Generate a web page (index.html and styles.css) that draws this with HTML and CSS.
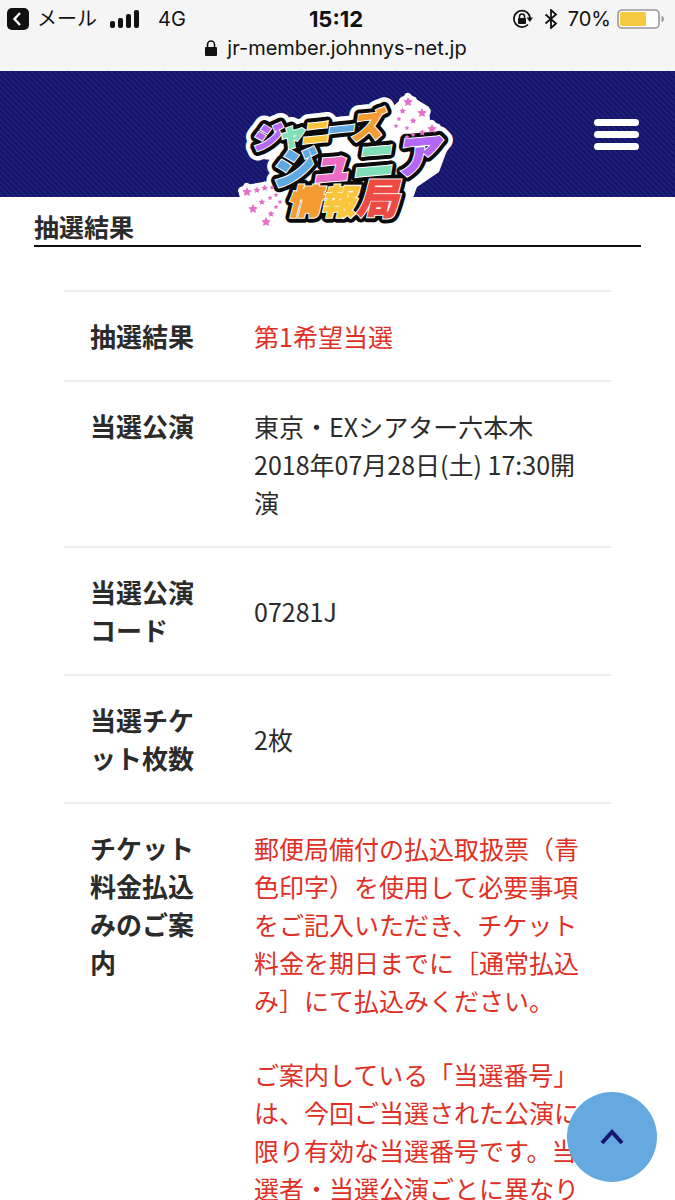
FILE: index.html
```html
<!DOCTYPE html>
<html lang="ja">
  <head>
    <meta charset="UTF-8" />
    <title>抽選結果</title>
    <meta name="viewport" content="width=device-width,initial-scale=1" />
    <link rel="stylesheet" href="styles.css">
  </head>
  <body>
    <div class="screen">
      <!-- ステータスバー -->
      <div class="browser-bar">
        <div class="status">
          <div class="status-left">
            <a href="#" class="back-app">
              <svg width="22" height="22" viewBox="0 0 22 22" aria-hidden="true">
                <rect width="22" height="22" rx="5" />
                <path d="M13 5 7.500 11l5.500 6" fill="none" stroke="#fff" stroke-width="2.400" />
              </svg>
              メール
            </a>
            <svg class="signal" width="29" height="20" viewBox="0 0 29 20" aria-hidden="true">
              <rect x="0" y="12" width="5" height="7" rx="2" />
              <rect x="8" y="9" width="5" height="10" rx="2" />
              <rect x="16" y="5" width="5" height="14" rx="2" />
              <rect x="24" y="1" width="5" height="18" rx="2" />
            </svg>
            <span>4G</span>
          </div>
          <b class="clock">15:12</b>
          <div class="status-right">
            <svg width="22" height="20" viewBox="0 0 22 20" aria-hidden="true">
              <path d="M17.300 6A8.200 8.200 0 1 0 16 15.500" fill="none" stroke="#111" stroke-width="1.800" />
              <path d="M14.500 8.500h6.500l-3.200 4.500z" />
              <path d="M17 5.500q.9 1.500.9 4" fill="none" stroke="#111" stroke-width="1.800" />
              <rect x="6" y="9" width="8" height="6" rx="1" />
              <path d="M7.500 9V7.500a2.500 2.500 0 0 1 5 0V9" fill="none" stroke="#111" stroke-width="1.500" />
            </svg>
            <svg width="14" height="20" viewBox="0 0 14 20" aria-hidden="true">
              <path d="m1.500 5.500 10.500 9-5 4.500V1l5 4.500-10.500 9" fill="none" stroke="#111" stroke-width="1.800" />
            </svg>
            <div class="battery">
              <span>70%</span>
              <svg width="48" height="20" viewBox="0 0 48 20" aria-hidden="true">
                <rect x="1" y="1" width="41" height="18" rx="4" fill="#fff" stroke="#999" stroke-width="1.600" />
                <rect x="3" y="3" width="26" height="14" rx="1" fill="#f6c940" />
                <path d="M44.500 6.500q2.500 1 2.500 3.500t-2.500 3.500z" fill="#999" />
              </svg>
            </div>
          </div>
        </div>
        <div class="address">
          <svg width="12" height="17" viewBox="0 0 12 17" aria-hidden="true">
            <rect x="0" y="7" width="12" height="9" rx="1" />
            <path d="M2.500 8V4.500a3.500 3.500 0 0 1 7 0V8" fill="none" stroke="#111" stroke-width="1.600" />
          </svg>
          <span>jr-member.johnnys-net.jp</span>
        </div>
      </div>

      <!-- ヘッダー -->
      <header class="header">
        <a href="#" class="logo" aria-label="ジャニーズジュニア情報局">
          <svg width="220" height="142" viewBox="0 0 220 142">
            <defs>
              <path id="star" d="M0-5 1.500-1.900 4.800-1.500 2.400.8 2.900 4 0 2.500-2.900 4-2.400.8-4.800-1.500-1.500-1.900z" />
              <g id="stars">
                <use href="#star" x="172" y="12" />
                <use href="#star" x="186" y="23" />
                <use href="#star" x="196" y="39" />
                <use href="#star" x="11" y="102" />
                <use href="#star" x="17" y="119" />
                <use href="#star" x="30" y="132" />
                <g transform="scale(.7)">
                  <use href="#star" x="238" y="30" />
                  <use href="#star" x="253" y="44" />
                  <use href="#star" x="266" y="61" />
                  <use href="#star" x="30" y="143" />
                  <use href="#star" x="41" y="140" />
                  <use href="#star" x="37" y="160" />
                  <use href="#star" x="50" y="177" />
                </g>
                <g transform="scale(.5)">
                  <use href="#star" x="326" y="58" />
                  <use href="#star" x="320" y="72" />
                  <use href="#star" x="342" y="76" />
                  <use href="#star" x="354" y="90" />
                  <use href="#star" x="342" y="94" />
                  <use href="#star" x="72" y="195" />
                  <use href="#star" x="68" y="216" />
                  <use href="#star" x="80" y="210" />
                  <use href="#star" x="80" y="234" />
                  <use href="#star" x="88" y="224" />
                </g>
              </g>
              <g id="words">
                <text transform="rotate(-6 20 62)" y="59" font-size="28"><tspan class="purple" x="17">ジ</tspan><tspan class="mint" x="42">ャ</tspan><tspan class="yellow" x="66">ニ</tspan><tspan class="blue" x="91">ー</tspan><tspan class="orange" x="116" font-size="32">ズ</tspan></text>
                <text transform="rotate(-5 34 95)" y="95" font-size="41"><tspan class="blue" x="36">ジ</tspan><tspan class="pink" x="75">ュ</tspan><tspan class="mint" x="117">ニ</tspan><tspan class="purple" x="160" font-size="44">ア</tspan></text>
                <text class="kanji" y="124" font-size="34"><tspan class="orange" x="51">情</tspan><tspan class="yellow" x="85">報</tspan><tspan class="red" x="120" font-size="42">局</tspan></text>
              </g>
            </defs>
            <path fill="#fff" d="M20 40 105 28 151 22 163 11Q171-1 180 9L193 17 194 31Q209 34 203 46L213 55 203 82 181 97 170 127 55 130 50 108 30 140 5 110Q-1 98 10 95L33 91 35 70 18 68z" />
            <use href="#stars" class="halo" />
            <use href="#words" class="layer layer-white" />
            <use href="#words" class="layer layer-black" />
            <use href="#words" class="layer layer-edge" />
            <use href="#words" class="layer" />
            <use href="#stars" fill="#e56fca" />
          </svg>
        </a>
        <button type="button" class="menu-btn" aria-label="メニュー">
          <span></span>
          <span></span>
          <span></span>
        </button>
      </header>

      <!-- 抽選結果 -->
      <main class="main">
        <h1>抽選結果</h1>
        <table class="result">
          <tr>
            <th scope="row">抽選結果</th>
            <td class="red-text">第1希望当選</td>
          </tr>
          <tr>
            <th scope="row">当選公演</th>
            <td>東京・EXシアター六本木<br>2018年07月28日(土) 17:30開演</td>
          </tr>
          <tr>
            <th scope="row">当選公演コード</th>
            <td>07281J</td>
          </tr>
          <tr>
            <th scope="row">当選チケット枚数</th>
            <td>2枚</td>
          </tr>
          <tr>
            <th scope="row">チケット料金払込みのご案内</th>
            <td class="red-text">
              <p>郵便局備付の払込取扱票（青色印字）を使用して必要事項をご記入いただき、チケット料金を期日までに［通常払込み］にて払込みください。</p>
              <p>ご案内している「当選番号」は、今回ご当選された公演に限り有効な当選番号です。当選者・当選公演ごとに異なり</p>
            </td>
          </tr>
        </table>
      </main>

      <a href="#" class="to-top" aria-label="ページの先頭へ">
        <svg width="24" height="16" viewBox="0 0 24 16">
          <path d="M2 14 12 3l10 11" fill="none" stroke="#17176f" stroke-width="4" />
        </svg>
      </a>
    </div>
  </body>
</html>
```

FILE: styles.css
```css
* {
  box-sizing: border-box;
}
body {
  margin: 0;
  background: #fff;
  color: #2b2b2b;
  font-family: "Noto Sans CJK JP", sans-serif;
}
a {
  color: inherit;
  text-decoration: none;
}
.screen {
  height: 100vh;
  overflow: hidden;
}

/* ステータスバー */
.browser-bar {
  height: 71px;
  padding: 6px 10px 0 7px;
  background: #f5f5f5;
  color: #111;
  font-family: Inter, "Noto Sans CJK JP", sans-serif;
  font-size: 22px;
  line-height: 26px;
}
.browser-bar svg {
  fill: #111;
  flex: none;
}
.status {
  display: grid;
  grid-template-columns: 1fr auto 1fr;
  align-items: center;
}
.status-left,
.status-right,
.back-app,
.battery,
.address {
  display: flex;
  align-items: center;
}
.status-left {
  gap: 13px;
  font-size: 20px;
}
.back-app {
  gap: 8px;
}
.signal {
  margin-right: 6px;
}
.status-right {
  justify-content: flex-end;
  gap: 10px;
  font-size: 20px;
}
.battery {
  gap: 6px;
}
.address {
  justify-content: center;
  gap: 10px;
  margin-top: 3px;
  font-size: 20px;
}

/* ヘッダー */
.header {
  position: relative;
  z-index: 1;
  display: flex;
  align-items: center;
  justify-content: flex-end;
  height: 126px;
  padding: 0 36px;
  background: repeating-linear-gradient(45deg, #15156b 0, #15156b 2px, #26267f 3px, #15156b 4px);
}
.logo {
  position: absolute;
  top: 19px;
  left: 50%;
  margin-left: -102px;
}
.logo svg {
  display: block;
  overflow: visible;
  font-family: "Noto Sans CJK JP", sans-serif;
  font-weight: 900;
  font-style: italic;
}
.layer {
  --w: 1px;
  stroke-width: var(--w);
  stroke-linejoin: miter;
}
.layer-white {
  --edge: #fff;
  --w: 20px;
  stroke-linejoin: round;
}
.layer-black {
  --edge: #0b0b0b;
  --w: 11px;
  stroke-linejoin: round;
}
.layer-edge {
  --edge: #fff;
  --w: 3px;
}
#words tspan {
  fill: currentColor;
  stroke: var(--edge, currentColor);
}
.halo {
  fill: #fff;
  stroke: #fff;
  stroke-width: 8px;
  stroke-linejoin: round;
}
.purple {
  color: #b367f5;
}
.mint {
  color: #7fe0b8;
}
.yellow {
  color: #fbc63c;
}
.blue {
  color: #5fa8e0;
}
.orange {
  color: #f49b32;
}
.pink {
  color: #ec6cc4;
}
.red {
  color: #ee4a44;
}
.menu-btn {
  display: flex;
  flex-direction: column;
  gap: 5px;
  width: 45px;
  padding: 0;
  border: none;
  background: none;
  cursor: pointer;
}
.menu-btn span {
  height: 7px;
  border-radius: 4px;
  background: #fff;
}

/* 抽選結果 */
.main {
  padding: 11px 34px 0;
}
h1 {
  margin: 0 0 43px;
  padding-bottom: 1px;
  border-bottom: 2px solid #111;
  font-size: 25px;
  line-height: 36px;
}
.result {
  width: calc(100% - 60px);
  margin: 0 30px;
  border-collapse: separate;
  border-spacing: 0;
  table-layout: fixed;
  font-size: 25px;
  line-height: 38px;
}
.result th,
.result td {
  padding: 25px 26px;
  border-top: 2px solid #ececec;
  text-align: left;
}
.result th {
  width: 30%;
  padding-right: 18px;
  font-size: 26px;
  vertical-align: top;
}
.result td {
  padding-right: 24px;
}
.result p {
  margin: 0 0 36px;
}
.red-text {
  color: #df3026;
}

.to-top {
  position: fixed;
  right: 18px;
  bottom: 18px;
  z-index: 2;
  display: flex;
  align-items: center;
  justify-content: center;
  width: 90px;
  height: 90px;
  border-radius: 50%;
  background: #64a9df;
}
```
